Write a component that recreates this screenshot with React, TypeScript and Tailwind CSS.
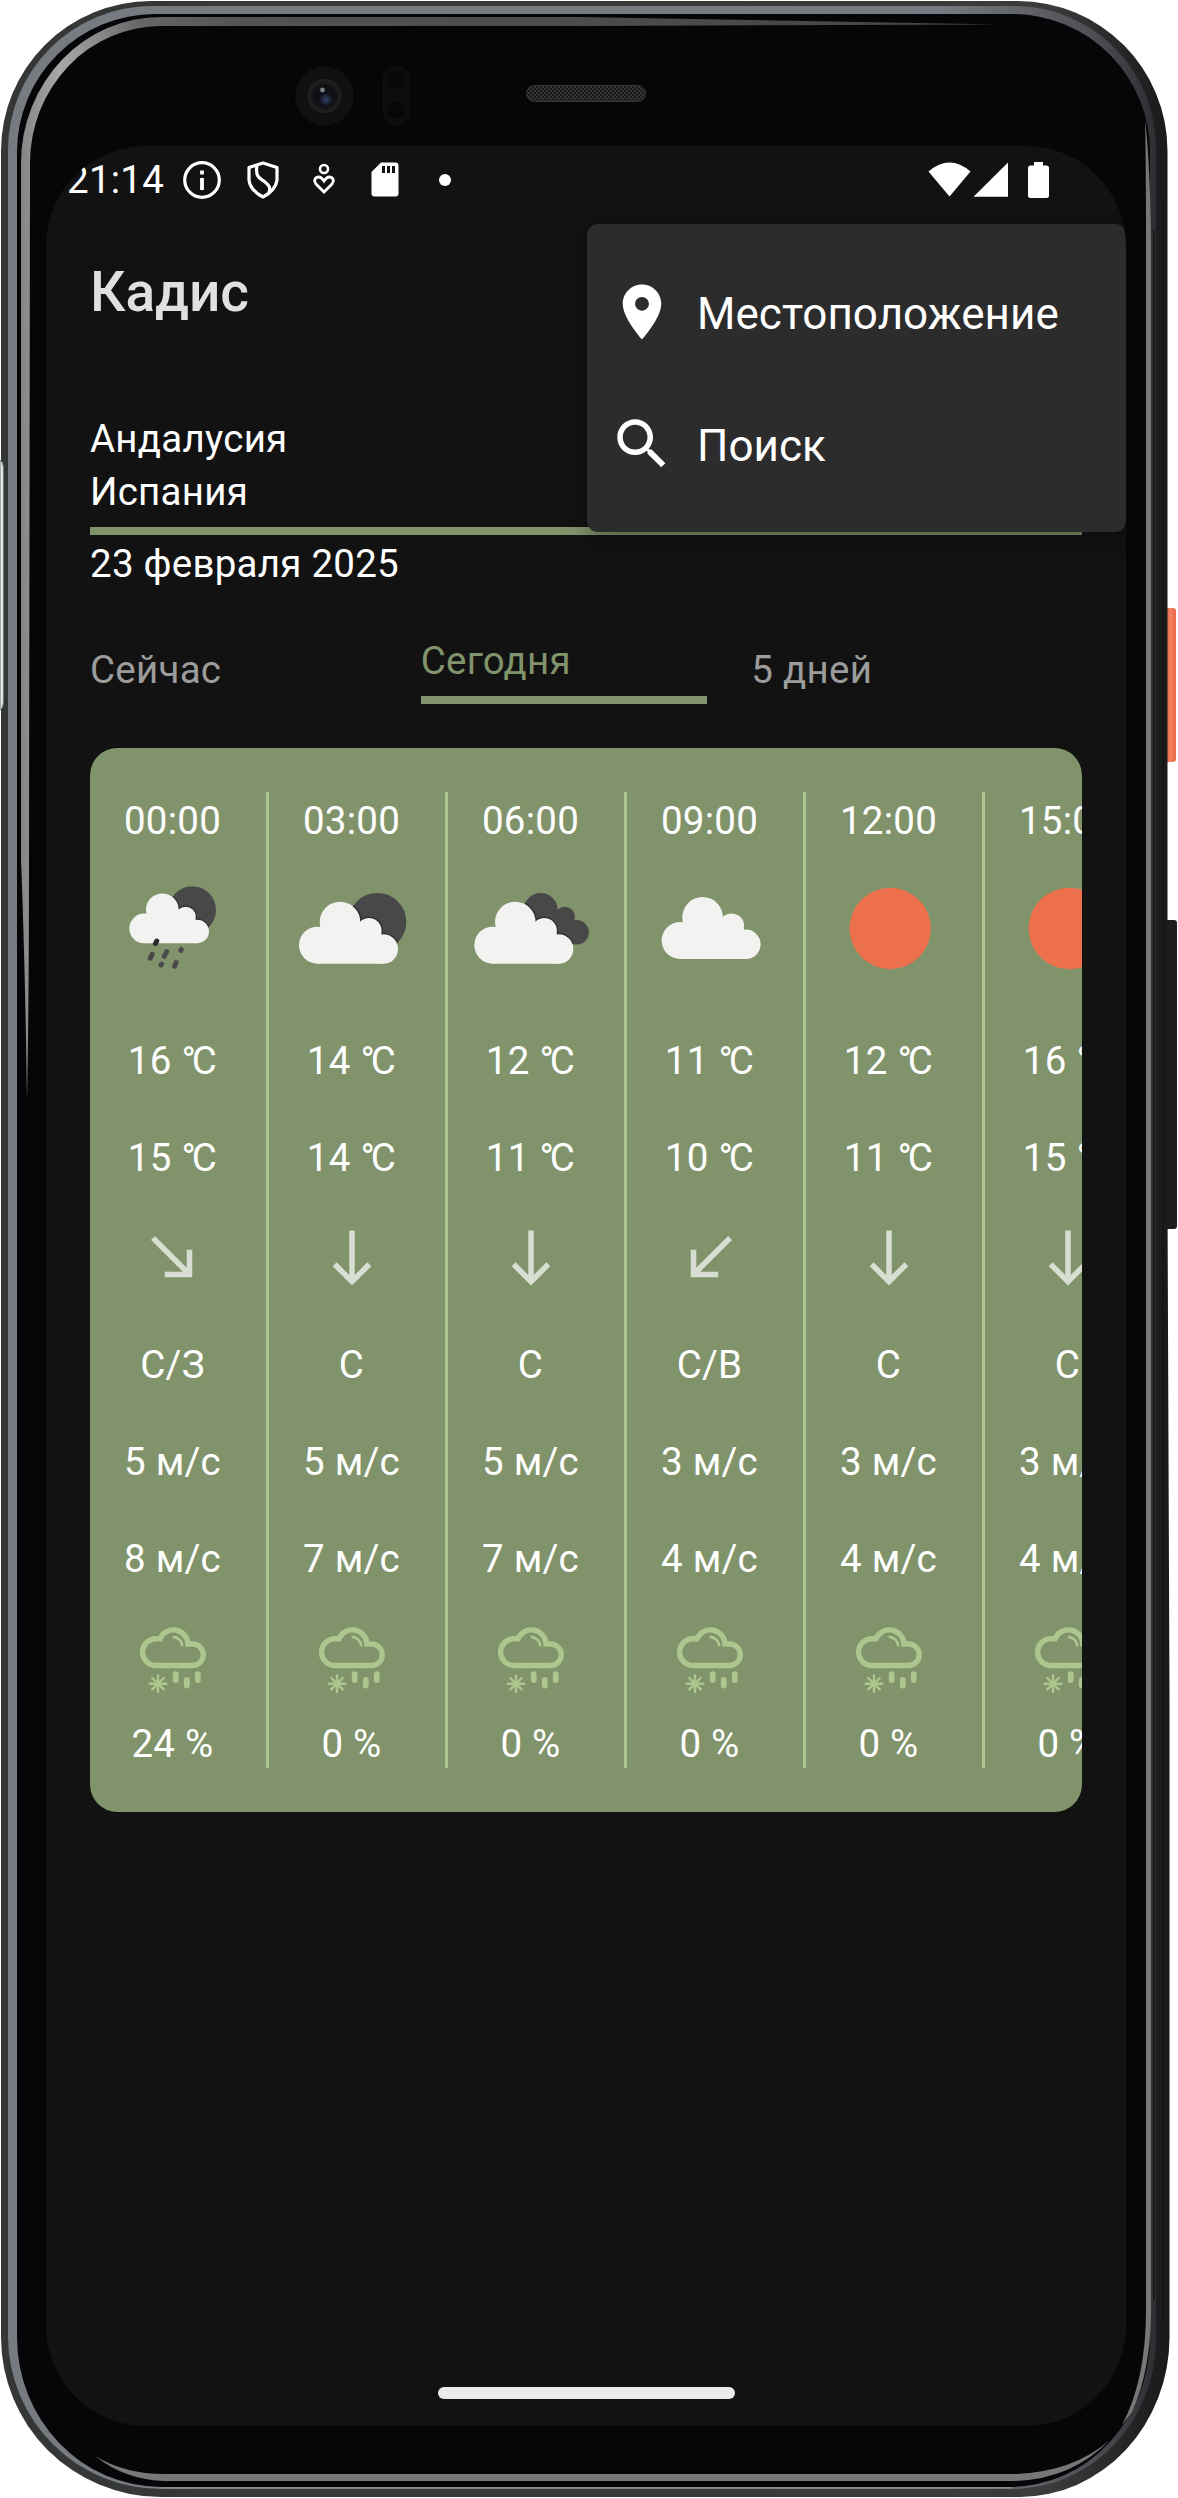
import React from "react";

type Sky = "rain" | "moonCloud" | "clouds" | "cloud" | "sun";
type Wind = "se" | "s" | "sw";

interface Hour {
  time: string;
  sky: Sky;
  temp: string;
  feels: string;
  wind: Wind;
  dir: string;
  speed: string;
  gust: string;
  chance: string;
}

const HOURS: Hour[] = [
  { time: "00:00", sky: "rain", temp: "16", feels: "15", wind: "se", dir: "С/З", speed: "5 м/с", gust: "8 м/с", chance: "24 %" },
  { time: "03:00", sky: "moonCloud", temp: "14", feels: "14", wind: "s", dir: "С", speed: "5 м/с", gust: "7 м/с", chance: "0 %" },
  { time: "06:00", sky: "clouds", temp: "12", feels: "11", wind: "s", dir: "С", speed: "5 м/с", gust: "7 м/с", chance: "0 %" },
  { time: "09:00", sky: "cloud", temp: "11", feels: "10", wind: "sw", dir: "С/В", speed: "3 м/с", gust: "4 м/с", chance: "0 %" },
  { time: "12:00", sky: "sun", temp: "12", feels: "11", wind: "s", dir: "С", speed: "3 м/с", gust: "4 м/с", chance: "0 %" },
  { time: "15:00", sky: "sun", temp: "16", feels: "15", wind: "s", dir: "С", speed: "3 м/с", gust: "4 м/с", chance: "0 %" },
];

const ARROWS: Record<Wind, string> = {
  se: "M19 9h-2v6.59L5.41 4 4 5.41 15.59 17H9v2h10V9z",
  s: "M19 15l-1.41-1.41L13 18.17V2h-2v16.17l-4.59-4.58L5 15l7 7 7-7z",
  sw: "M15 19v-2H8.41L20 5.41 18.59 4 7 15.59V9H5v10h10z",
};

function CloudShape() {
  return (
    <>
      <circle cx="48.5" cy="97.2" r="18.5" />
      <circle cx="71" cy="74" r="20.3" />
      <circle cx="100" cy="82.7" r="12.6" />
      <circle cx="114.3" cy="101" r="14.7" />
      <path d="M48.5 115.7H114.3L112 84L100 80L80 72L52 80Z" />
    </>
  );
}

function Cloud({ transform, clip }: { transform?: string; clip?: string }) {
  return (
    <>
      {clip && (
        <g clipPath={clip}>
          <g transform={transform} fill="#2b2b2c" stroke="#2b2b2c" strokeWidth="2.6">
            <CloudShape />
          </g>
        </g>
      )}
      <g transform={transform} fill="#f2f2f1">
        <CloudShape />
      </g>
    </>
  );
}

function SkyIcon({ sky }: { sky: Sky }) {
  return (
    <svg className="h-[160px] w-[165px] shrink-0" viewBox="0 0 165 160">
      {sky === "rain" && (
        <>
          <clipPath id="moon-a"><circle cx="102.3" cy="62" r="23.7" /></clipPath>
          <circle cx="102.3" cy="62" r="23.7" fill="#484849" />
          <Cloud transform="translate(15.15 2.2) scale(.805)" clip="url(#moon-a)" />
          <g stroke="#4a4a4b" strokeWidth="5" strokeLinecap="round">
            <path d="M65.4 95.6l1.4-2.6" stroke="#2c2c2d" />
            <path d="M60.3 110.2l1.8-4M74.3 108.3l2.4-4.6M90.8 102.3l.5-.8M71 117l.6-.8M84.6 118.2l1.6-3.6" />
          </g>
        </>
      )}
      {sky === "moonCloud" && (
        <>
          <clipPath id="moon-b"><circle cx="108.3" cy="73.9" r="29" /></clipPath>
          <circle cx="108.3" cy="73.9" r="29" fill="#484849" />
          <Cloud clip="url(#moon-b)" />
        </>
      )}
      {sky === "clouds" && (
        <>
          <clipPath id="back-c">
            <circle cx="92.7" cy="62" r="17" />
            <circle cx="117" cy="68.7" r="10" />
            <circle cx="128.7" cy="84.3" r="12.2" />
            <path d="M92 60L117 66L126 96H100Z" />
          </clipPath>
          <rect width="165" height="160" fill="#484849" clipPath="url(#back-c)" />
          <Cloud transform="translate(-3.7 0)" clip="url(#back-c)" />
        </>
      )}
      {sky === "cloud" && <Cloud transform="translate(4.6 -4.7)" />}
      {sky === "sun" && <circle cx="84.2" cy="80.5" r="40.7" fill="#ed704c" />}
    </svg>
  );
}

function PrecipIcon() {
  return (
    <svg className="mt-[40.5px] h-[66px] w-[66px] shrink-0" viewBox="0 0 66 66" fill="none" stroke="#adc68d">
      <path
        strokeWidth="5.4"
        d="M16 38.5H52.5A10.75 10.75 0 0 0 52.5 17H48A14.6 14.6 0 0 0 20 11.7H16A13.4 13.4 0 0 0 16 38.5Z"
      />
      <path strokeWidth="2.7" d="M32.7 9.8A10 10 0 0 1 42.4 19.3" />
      <path strokeWidth="2.4" strokeLinecap="round" d="M18 48.5V65M9.7 56.7H26.3M12.3 51L23.7 62.4M23.7 51L12.3 62.4" />
      <path strokeWidth="5.8" strokeLinecap="round" d="M35.7 47.2V53M46.8 52.8V58.6M57.8 47.2V53" />
    </svg>
  );
}

function Cell({ children, className = "" }: { children: React.ReactNode; className?: string }) {
  return <div className={`h-[55px] shrink-0 whitespace-nowrap leading-[55px] ${className}`}>{children}</div>;
}

function Degrees({ value }: { value: string }) {
  return (
    <>
      {value} <span className="tracking-[-4px]">°</span>C
    </>
  );
}

function HourColumn({ h }: { h: Hour }) {
  return (
    <div className="flex w-[179px] shrink-0 border-r-[3px] border-[#adc68d]">
      <div className="flex w-[165px] flex-col items-center text-white">
        <Cell className="mt-px">{h.time}</Cell>
        <SkyIcon sky={h.sky} />
        <Cell className="mt-[25px]"><Degrees value={h.temp} /></Cell>
        <Cell className="mt-[42px]"><Degrees value={h.feels} /></Cell>
        <svg className="mt-[40px] h-[66px] w-[66px] shrink-0" viewBox="0 0 24 24" fill="#d9ded2">
          <path d={ARROWS[h.wind]} />
        </svg>
        <Cell className="mt-[46px]">{h.dir}</Cell>
        <Cell className="mt-[42px]">{h.speed}</Cell>
        <Cell className="mt-[42px]">{h.gust}</Cell>
        <PrecipIcon />
        <Cell className="mt-[23.5px]">{h.chance}</Cell>
      </div>
    </div>
  );
}

function PhoneFrame() {
  return (
    <svg className="absolute inset-0 h-[2498px] w-[1178px]" viewBox="0 0 1178 2498" fill="none" aria-hidden="true">
      <defs>
        <linearGradient id="rim" x1="0" x2="1" y1="0" y2="0">
          <stop offset="0" stopColor="#353736" />
          <stop offset=".9" stopColor="#3a3c3c" />
          <stop offset="1" stopColor="#18191a" />
        </linearGradient>
        <linearGradient id="metal" x1="0" x2="1178" y1="0" y2="0" gradientUnits="userSpaceOnUse">
          <stop offset="0" stopColor="#777b81" />
          <stop offset=".8" stopColor="#777a82" />
          <stop offset=".93" stopColor="#4d4e53" />
          <stop offset=".985" stopColor="#2b2c2f" />
        </linearGradient>
        <linearGradient id="glare" x1="0" x2="1000" y1="0" y2="0" gradientUnits="userSpaceOnUse">
          <stop offset=".02" stopColor="#858585" />
          <stop offset=".06" stopColor="#a8a8a8" />
          <stop offset=".14" stopColor="#666666" />
          <stop offset=".25" stopColor="#525252" />
          <stop offset="1" stopColor="#444444" />
        </linearGradient>
        <linearGradient id="coral" x1="0" x2="1" y1="0" y2="0">
          <stop offset="0" stopColor="#d94f30" />
          <stop offset=".5" stopColor="#f3805f" />
          <stop offset="1" stopColor="#e8694a" />
        </linearGradient>
        <pattern id="mesh" width="4" height="4" patternUnits="userSpaceOnUse">
          <rect width="4" height="4" fill="#191919" />
          <circle cx="1" cy="1" r=".9" fill="#424242" />
          <circle cx="3" cy="3" r=".9" fill="#424242" />
        </pattern>
        <radialGradient id="lens" cx=".5" cy=".5" r=".5">
          <stop offset="0" stopColor="#0c0e16" />
          <stop offset=".6" stopColor="#101115" />
          <stop offset=".85" stopColor="#1c1c1c" />
          <stop offset="1" stopColor="#222222" />
        </radialGradient>
        <radialGradient id="iris" cx=".5" cy=".5" r=".5">
          <stop offset="0" stopColor="#34406a" />
          <stop offset="1" stopColor="#34406a" stopOpacity="0" />
        </radialGradient>
      </defs>

      <rect x="1164" y="608" width="12" height="154" rx="3" fill="url(#coral)" />
      <rect x="1164" y="920" width="13" height="309" rx="3" fill="#1c1d1d" />

      <path d="M151 1H1018A150 150 0 0 1 1167.500 151V1200L1169.500 1700V2337A150 160 0 0 1 1020 2497H161A160 160 0 0 1 1 2337V151A150 150 0 0 1 151 1Z" fill="url(#rim)" />
      <path d="M152 6H1014A142 142 0 0 1 1156 152V2337A144 150 0 0 1 1012 2489H161A153 153 0 0 1 8 2337V150A144 144 0 0 1 152 6Z" fill="url(#metal)" />
      <path d="M1012 2487.500H161" stroke="#8a8c8c" strokeWidth="2" />
      <path d="M155 14H1012A138 138 0 0 1 1150 155V2337A140 150 0 0 1 1010 2487H161A144 150 0 0 1 17 2337V152A138 138 0 0 1 155 14Z" fill="#060608" />
      <path d="M1154 230V2300" stroke="#1b1c1e" strokeWidth="2" />
      <path d="M1163 200V2320" stroke="#151617" strokeWidth="1.500" />
      <path
        d="M21 860V163A140 146 0 0 1 161 17H580L999 24.500L580 26H161A131 137 0 0 0 30 163L29 860Q29 1000 27 1100Q25 960 21 860Z"
        fill="url(#glare)"
      />
      <path
        d="M1145 120Q1146 160 1146 240V2310Q1146 2380 1122 2425L1132 2412Q1151 2370 1151 2310V240Q1150 160 1145 120Z"
        fill="#777777"
      />
      <path d="M95 2456Q125 2474 165 2474H1010Q1070 2474 1110 2440Q1070 2481 1010 2481H165Q125 2480 95 2456Z" fill="#777777" />

      <path d="M0 460Q3.500 462 3.500 470V700Q3.500 708 0 710Z" fill="#dfe5e3" stroke="#6f7977" />

      <circle cx="324.500" cy="96" r="29.500" fill="#101010" />
      <circle cx="324.500" cy="96" r="17" fill="url(#lens)" />
      <circle cx="326" cy="99.500" r="7" fill="url(#iris)" />
      <circle cx="322.500" cy="90" r="2.400" fill="#7c7c84" />
      <rect x="383.500" y="66" width="25.500" height="59" rx="12.750" fill="#0d0d0e" stroke="#121213" />
      <circle cx="396" cy="80" r="10" fill="#080809" stroke="#111112" />
      <circle cx="396" cy="110" r="10" fill="#080809" stroke="#111112" />
      <rect x="526.500" y="85.500" width="119" height="16" rx="8" fill="url(#mesh)" stroke="#333333" />
    </svg>
  );
}

function StatusBar() {
  return (
    <div className="flex h-[67px] items-center pl-[21px] pr-[77px] text-white">
      <span className="w-[100px] whitespace-nowrap leading-[55px]">21:14</span>
      <svg className="ml-[14.5px] h-[40px] w-[40px]" viewBox="0 0 40 40" fill="none" stroke="#fff">
        <circle cx="20" cy="20" r="17.300" strokeWidth="3.200" />
        <path strokeWidth="3.800" d="M20 18V30M20 10.500V14.500" />
      </svg>
      <svg className="ml-[21px] h-[40px] w-[40px]" viewBox="0 0 40 40" fill="none" stroke="#fff" strokeLinejoin="round">
        <path strokeWidth="3.200" d="M20 3L34 7.500V20Q33 30 20 37Q7 30 6 20V7.500Z" />
        <path strokeWidth="3.200" d="M14 5C12 18 17 18 22 22C28 27 27 29 26 32.500" />
      </svg>
      <svg className="ml-[21px] h-[40px] w-[40px]" viewBox="0 0 40 40" fill="none" stroke="#fff">
        <circle cx="20" cy="9" r="4" strokeWidth="2.600" />
        <path strokeWidth="2.800" d="M20 32L12 24Q9 20 12.500 17.500Q16.500 15.500 20 21Q23.500 15.500 27.500 17.500Q31 20 28 24Z" />
      </svg>
      <svg className="ml-[21px] h-[40px] w-[40px]" viewBox="0 0 40 40">
        <path fill="#fff" d="M16 2.500H30.500Q33.500 2.500 33.500 5.500V33.500Q33.500 36.500 30.500 36.500H9.500Q6.500 36.500 6.500 33.500V12Z" />
        <path stroke="#121212" strokeWidth="3" d="M18.500 6V13M23.500 6V13M28.500 6V13" />
      </svg>
      <span className="ml-[34px] h-[12px] w-[12px] rounded-full bg-white" />
      <svg className="ml-auto h-[38px] w-[121px]" viewBox="928 160 121 38" fill="#fff">
        <path d="M928.500 170.500Q949.500 152.500 970.500 170.500L949.500 195.500Z" />
        <path d="M1008 161.500V195.700H973.500Z" />
        <path d="M1034 161H1043V164.500H1046.500Q1049 164.500 1049 167V194.500Q1049 197 1046.500 197H1030.500Q1028 197 1028 194.500V167Q1028 164.500 1030.500 164.500H1034Z" />
      </svg>
    </div>
  );
}

function Menu() {
  return (
    <div className="absolute right-0 top-[78px] flex h-[308px] w-[539px] flex-col rounded-[11px] bg-[#2c2c2c] py-[22px] text-[44px] tracking-[0.05px] text-white shadow-[0_6px_22px_rgba(0,0,0,0.35)]">
      <div className="flex h-[132px] items-center pl-[22px]">
        <svg className="h-[66px] w-[66px]" viewBox="0 0 24 24" fill="#fff">
          <path d="M12 2C8.130 2 5 5.130 5 9c0 5.250 7 13 7 13s7-7.750 7-13c0-3.870-3.130-7-7-7zm0 9.500c-1.380 0-2.500-1.120-2.500-2.500s1.120-2.500 2.500-2.500 2.500 1.120 2.500 2.500-1.120 2.500-2.500 2.500z" />
        </svg>
        <span className="ml-[22px] pt-[4px]">Местоположение</span>
      </div>
      <div className="flex h-[132px] items-center pl-[22px]">
        <svg className="h-[66px] w-[66px]" viewBox="0 0 24 24" fill="#fff">
          <path d="M15.500 14h-.79l-.28-.27C15.410 12.590 16 11.110 16 9.500 16 5.910 13.090 3 9.500 3S3 5.910 3 9.500 5.910 16 9.500 16c1.610 0 3.090-.59 4.230-1.570l.27.28v.79l5 4.990L20.490 19l-4.990-5zm-6 0C7.010 14 5 11.990 5 9.500S7.010 5 9.500 5 14 7.010 14 9.500 11.990 14 9.500 14z" />
        </svg>
        <span className="ml-[22px] pt-[4px]">Поиск</span>
      </div>
    </div>
  );
}

export default function App() {
  return (
    <div className="relative h-[2498px] w-[1178px] overflow-hidden bg-white pl-[46px] pt-[146px] font-[Roboto,sans-serif] text-[38.5px] tracking-[0.25px]">
      <PhoneFrame />
      <div className="relative flex h-[2280px] w-[1080px] flex-col overflow-hidden rounded-[100px] bg-[#121212]">
        <StatusBar />
        <h1 className="h-[158px] pl-[44px] text-[55px] font-medium leading-[158px] tracking-normal text-[#e0e0e0]">Кадис</h1>

        <main className="flex flex-col px-[44px]">
          <div className="mt-[41px] leading-[53px] text-white">
            <div>Андалусия</div>
            <div>Испания</div>
          </div>
          <div className="mt-[9px] h-[8px] bg-[#81936b]" />
          <div className="mt-[2px] leading-[53px] text-white">23 февраля 2025</div>

          <nav className="mt-[44px] flex h-[70px] leading-[53px] text-[#9c9c9c]">
            <div className="mr-[44px] flex flex-1 items-center">Сейчас</div>
            <div className="mr-[44px] flex flex-1 flex-col justify-between text-[#81936b]">
              <span>Сегодня</span>
              <span className="h-[8px] bg-[#81936b]" />
            </div>
            <div className="mr-[44px] flex flex-1 items-center">5 дней</div>
          </nav>

          <section className="mt-[44px] h-[1064px] overflow-hidden rounded-[27.5px] bg-[#81936b] py-[44px]">
            <div className="flex h-[976px]">
              {HOURS.map((h) => (
                <HourColumn key={h.time} h={h} />
              ))}
            </div>
          </section>
        </main>

        <div className="mb-[27px] mt-auto h-[12px] w-[297px] self-center rounded-full bg-[#ebebeb]" />
        <Menu />
      </div>
    </div>
  );
}
